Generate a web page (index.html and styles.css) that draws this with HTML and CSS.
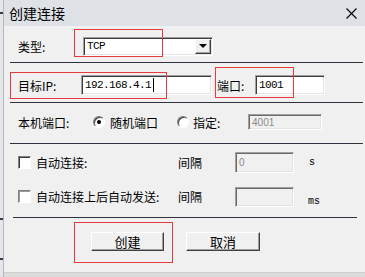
FILE: index.html
```html
<!DOCTYPE html>
<html lang="zh-CN">
<head>
  <meta charset="UTF-8" />
  <title>创建连接</title>
  <link rel="stylesheet" href="styles.css">
</head>
<body>
  <div class="backwin">
    <span class="mark mark-1"></span>
    <span class="mark mark-2"></span>
    <span class="mark mark-3"></span>
  </div>

  <div class="dialog">
    <!-- Title -->
    <div class="titlebar">
      <span class="title">创建连接</span>
      <svg class="close" width="11" height="11" viewBox="0 0 11 11">
        <path d="M0.5 0.5 L10.5 10.5 M10.5 0.5 L0.5 10.5" stroke="#000" stroke-width="1.1" fill="none"/>
      </svg>
    </div>

    <!-- Type -->
    <div class="row row-type">
      <span class="label w-type">类型:</span>
      <div class="field select">
        <span class="mono">TCP</span>
        <span class="drop"><span class="arrow"></span></span>
      </div>
    </div>
    <div class="sep"></div>

    <!-- Target -->
    <div class="row row-target">
      <span class="label w-ip">目标IP:</span>
      <div class="field input-ip"><span class="mono">192.168.4.1</span><span class="caret"></span></div>
      <span class="label w-port">端口:</span>
      <div class="field input-port"><span class="mono">1001</span></div>
    </div>
    <div class="sep"></div>

    <!-- Local port -->
    <div class="row row-local">
      <span class="label w-local">本机端口:</span>
      <span class="radio checked"></span>
      <span class="label opt-random">随机端口</span>
      <span class="radio"></span>
      <span class="label opt-fixed">指定:</span>
      <div class="field disabled input-local"><span class="dim">4001</span></div>
    </div>
    <div class="sep"></div>

    <!-- Auto connect -->
    <div class="row row-auto">
      <span class="check"></span>
      <span class="label w-auto">自动连接:</span>
      <span class="label w-gap">间隔</span>
      <div class="field disabled input-gap tall"><span class="dim">0</span></div>
      <span class="unit">s</span>
    </div>
    <div class="row row-send">
      <span class="check soft"></span>
      <span class="label w-auto">自动连接上后自动发送:</span>
      <span class="label w-gap">间隔</span>
      <div class="field disabled input-gap"></div>
      <span class="unit low">ms</span>
    </div>
    <div class="sep sep-short"></div>

    <!-- Buttons -->
    <div class="buttons">
      <button class="btn">创建</button>
      <button class="btn">取消</button>
    </div>

    <!-- annotation boxes -->
    <div class="mark-box box-type"></div>
    <div class="mark-box box-ip"></div>
    <div class="mark-box box-port"></div>
    <div class="mark-box box-create"></div>
  </div>
</body>
</html>
```

FILE: styles.css
```css
body {
  margin: 0;
  width: 365px;
  height: 277px;
  overflow: hidden;
  display: flex;
  background: #dcdcdc;
  font-family: "Noto Sans CJK SC", sans-serif;
  font-size: 12px;
  color: #000;
}

/* window behind the dialog */
.backwin {
  width: 3px;
  border-right: 1px solid #b4b8be;
  background: #e4e6e9;
  position: relative;
}

.mark {
  position: absolute;
  left: 0;
  width: 3px;
  height: 2px;
  background: #3a3a44;
}

.mark-1 { top: 12px; }
.mark-2 { top: 218px; }
.mark-3 { top: 258px; }

.dialog {
  flex: 1;
  height: 272px;
  display: flex;
  flex-direction: column;
  background: #f0f0f0;
  border-bottom: 1px solid #cfcfcf;
  position: relative;
}

.titlebar {
  height: 26px;
  background: #dee2e7;
  display: flex;
  align-items: center;
  justify-content: space-between;
  padding: 0 8px 0 5px;
  flex-shrink: 0;
}

.title {
  font-size: 14px;
}

.row {
  display: flex;
  align-items: center;
  padding-left: 14px;
  box-sizing: border-box;
  flex-shrink: 0;
}

.row-type { height: 36px; padding-top: 4px; }
.row-target { height: 39px; padding-top: 5px; }
.row-local { height: 40px; padding-bottom: 2px; }
.row-auto { height: 36px; }
.row-send { height: 33px; }

.sep {
  height: 1px;
  background: #30323e;
  margin: 0 2px 0 6px;
  flex-shrink: 0;
}

.sep-short {
  margin: 4px 8px 0 9px;
}

.label { white-space: nowrap; }

.w-type { width: 65px; }
.w-ip { width: 63px; }
.w-port { width: 38px; margin-left: 5px; }
.w-local { width: 75px; }
.opt-random { margin-left: 5px; margin-right: 19px; }
.opt-fixed { width: 55px; margin-left: 4px; }
.w-auto { width: 142px; margin-left: 5px; }
.w-gap { width: 57px; }

/* sunken fields */
.field {
  box-sizing: border-box;
  background: #fff;
  border: 1px solid;
  border-color: #a0a0a0 #ffffff #ffffff #a0a0a0;
  box-shadow: inset 1px 1px 0 #3c3c3c, inset -1px -1px 0 #e3e3e3;
  display: flex;
  align-items: center;
  padding-left: 3px;
}

.field.disabled {
  background: #f0f0f0;
  box-shadow: inset 1px 1px 0 #6a6a6a, inset -1px -1px 0 #e3e3e3;
}

.mono {
  font-family: "Liberation Mono", monospace;
  font-size: 11px;
  letter-spacing: -0.6px;
}

.dim {
  font-family: "Liberation Sans", sans-serif;
  font-size: 10px;
  color: #8a8a8a;
}

.caret {
  width: 1px;
  height: 14px;
  background: #000;
  margin-left: 2px;
}

.select {
  width: 130px;
  height: 19px;
  justify-content: space-between;
  padding-right: 1px;
}

.drop {
  width: 16px;
  height: 15px;
  box-sizing: border-box;
  background: #f0f0f0;
  border: 1px solid;
  border-color: #ffffff #404040 #404040 #ffffff;
  box-shadow: inset -1px -1px 0 #a0a0a0;
  display: flex;
  align-items: center;
  justify-content: center;
}

.arrow {
  width: 0;
  height: 0;
  border-left: 4px solid transparent;
  border-right: 4px solid transparent;
  border-top: 4px solid #000;
}

.input-ip { width: 131px; height: 20px; }
.input-port { width: 70px; height: 20px; }
.input-local { width: 74px; height: 16px; }
.input-gap { width: 59px; height: 20px; }
.input-gap.tall { height: 21px; }

.radio {
  width: 12px;
  height: 12px;
  box-sizing: border-box;
  border-radius: 50%;
  border: 1px solid;
  border-color: #7a7a7a #ffffff #ffffff #7a7a7a;
  box-shadow: inset 1px 1px 0 #3c3c3c;
  background: #fff;
  display: flex;
  align-items: center;
  justify-content: center;
}

.radio.checked::after {
  content: "";
  width: 4px;
  height: 4px;
  border-radius: 50%;
  background: #000;
}

.check {
  width: 13px;
  height: 13px;
  box-sizing: border-box;
  background: #fff;
  border: 1px solid;
  border-color: #808080 #ffffff #ffffff #808080;
  box-shadow: inset 1px 1px 0 #3c3c3c;
}

.check.soft {
  box-shadow: inset 1px 1px 0 #9a9a9a;
}

.unit {
  font-family: "Liberation Mono", monospace;
  font-size: 10px;
  margin-left: 15px;
}

.unit.low {
  margin-left: 14px;
  margin-top: 9px;
}

.buttons {
  display: flex;
  gap: 22px;
  padding: 14px 0 0 87px;
}

.btn {
  width: 73px;
  height: 19px;
  padding: 0;
  box-sizing: border-box;
  background: #f0f0f0;
  border: 1px solid;
  border-color: #ffffff #404040 #404040 #ffffff;
  box-shadow: inset -1px -1px 0 #a0a0a0;
  font-family: "Noto Sans CJK SC", sans-serif;
  font-size: 13px;
  line-height: 15px;
  color: #000;
}

.btn + .btn { width: 74px; }

/* red annotation boxes */
.mark-box {
  position: absolute;
  border: 1px solid #e63b3b;
  box-sizing: border-box;
  pointer-events: none;
}

.box-type { left: 70px; top: 29px; width: 89px; height: 28px; }
.box-ip { left: 6px; top: 72px; width: 157px; height: 27px; }
.box-port { left: 211px; top: 67px; width: 79px; height: 31px; }
.box-create { left: 70px; top: 222px; width: 99px; height: 41px; }
```
